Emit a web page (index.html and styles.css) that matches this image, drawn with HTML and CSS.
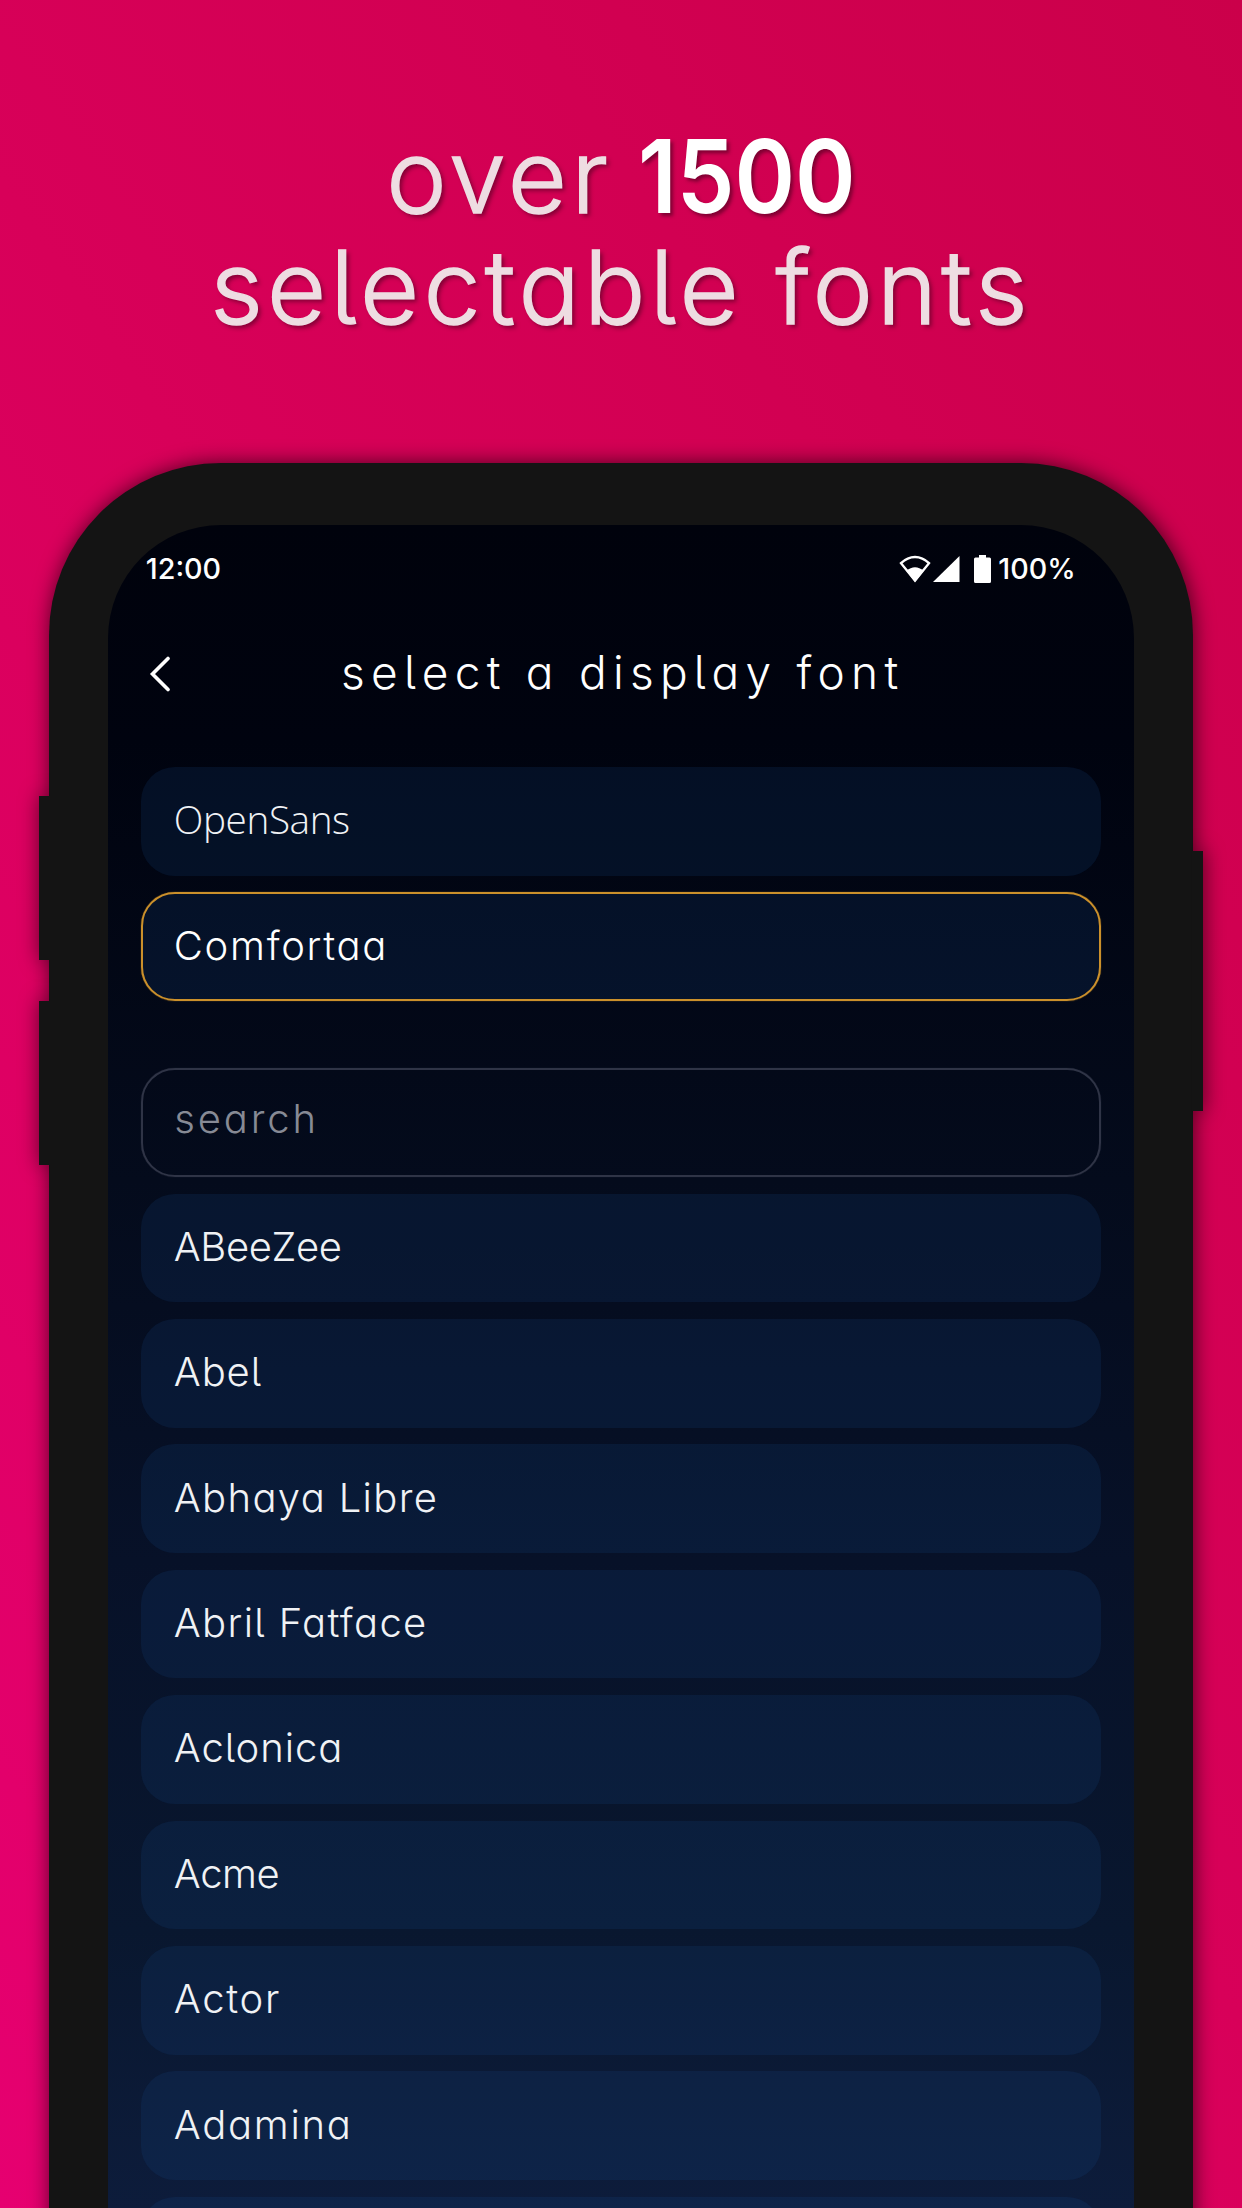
FILE: index.html
```
<!DOCTYPE html>
<html lang="en">
<head>
<meta charset="utf-8">
<title>Display fonts</title>
<link rel="stylesheet" href="styles.css">
</head>
<body>
<h1 class="headline"><span class="over">over</span> <strong class="count">1500</strong><br>selectable fonts</h1>
<div class="phone">
  <div class="frame">
    <main class="screen">
      <div class="status">
        <span>12:00</span>
        <div class="status-right">
          <svg class="wifi" width="32" height="28" viewBox="0 0 32 28"><path d="M16 25.500 2 8.200Q8.500 2 16 2t14 6.200Z" fill="none" stroke="#fff" stroke-width="2.400"/><path d="M16 27 7.500 16Q11.500 12.300 16 12.300T24.500 16Z" fill="#fff"/></svg>
          <svg class="signal" width="27" height="28" viewBox="0 0 27 28"><path d="M0 27 26.500 1V27Z" fill="#fff"/></svg>
          <svg class="battery" width="17" height="28" viewBox="0 0 17 28"><path d="M5 0h7v2.500h3.500A1.500 1.500 0 0 1 17 4v22.500a1.500 1.500 0 0 1-1.500 1.500h-14A1.500 1.500 0 0 1 0 26.500V4a1.500 1.500 0 0 1 1.500-1.500H5Z" fill="#fff"/></svg>
          <span>100%</span>
        </div>
      </div>
      <header class="bar">
        <svg class="back" width="22" height="36" viewBox="0 0 22 36"><path d="M19 2.500 3.500 18 19 33.500" fill="none" stroke="#fff" stroke-width="3.600" stroke-linecap="round"/></svg>
        <h2 class="title">select a display font</h2>
      </header>
      <ul class="list">
        <li class="row opensans">OpenSans</li>
        <li class="row selected ls-18">Comfortaa</li>
      </ul>
      <ul class="list">
        <li class="row search">search</li>
        <li class="row ls-tight">ABeeZee</li>
        <li class="row ls-10">Abel</li>
        <li class="row">Abhaya Libre</li>
        <li class="row">Abril Fatface</li>
        <li class="row ls-10">Aclonica</li>
        <li class="row ls-tight">Acme</li>
        <li class="row ls-18">Actor</li>
        <li class="row ls-18">Adamina</li>
        <li class="row"></li>
      </ul>
    </main>
  </div>
  <span class="side-button volume-up"></span>
  <span class="side-button volume-down"></span>
  <span class="side-button power"></span>
</div>
</body>
</html>
```
FILE: styles.css
```
* { box-sizing: border-box; }

body {
  margin: 0;
  height: 2208px;
  overflow: hidden;
  padding-top: 121px;
  background: linear-gradient(236deg, #cb004a 0%, #d80059 50%, #e60070 100%);
  font-family: Inter, "Open Sans", sans-serif;
  font-feature-settings: "cv11", "cv05";
  color: #fff;
}

.headline {
  margin: 0;
  height: 342px;
  font-size: 102px;
  line-height: 111px;
  font-weight: 300;
  letter-spacing: 4.200px;
  text-align: center;
  color: #eedde2;
  -webkit-text-stroke: 1.500px #eedde2;
  text-shadow: 3px 3px 4px rgba(60, 0, 25, .55);
}

.over {
  margin-right: -7px;
  letter-spacing: 4.200px;
}

.count {
  display: inline-block;
  margin-right: -24px;
  font-weight: 600;
  letter-spacing: 0;
  color: #fff;
  -webkit-text-stroke: 0;
  transform: scaleX(.9);
  transform-origin: left;
}

.phone {
  position: relative;
  width: 1143.400px;
  height: 1820px;
  margin: 0 auto;
}

.frame {
  height: 100%;
  padding: 62px 59px 0;
  border-radius: 172px 172px 0 0;
  background: #141414;
  box-shadow: 1px 0 20px rgba(0, 0, 0, .65);
}

.side-button {
  position: absolute;
  width: 11px;
  height: 163.500px;
  background: #141414;
  box-shadow: 1px 0 20px rgba(0, 0, 0, .6);
}

.volume-up,
.volume-down {
  left: -10.300px;
  clip-path: inset(-24px 0 -24px -24px);
}

.volume-up { top: 333px; }
.volume-down { top: 538px; }

.power {
  right: -10.300px;
  top: 388px;
  height: 259.500px;
  clip-path: inset(-24px -24px -24px 0);
}

.screen {
  height: 100%;
  padding: 26px 33px 0 32.500px;
  border-radius: 113px 113px 0 0;
  background: linear-gradient(#00020c 0, #00030f 215px, #040b1c 655px, #071128 1035px, #09172f 1405px, #0d1c3b 1683px);
}

.status {
  display: flex;
  justify-content: space-between;
  height: 35px;
  padding: 0 25px 0 5px;
  font-size: 28.700px;
  line-height: 35px;
  font-weight: 500;
}

.status-right { display: flex; }
.status-right svg { margin-top: 4px; }
.signal { margin-left: 2px; }
.battery { margin: 0 7px 0 14px; }

.bar {
  display: grid;
  grid-template-columns: 1fr auto 1fr;
  align-items: center;
  height: 56px;
  margin: 58px 0 67px;
}

.back { margin: 4px 0 0 8.500px; }

.title {
  margin: 0 -4px 0 0;
  font-size: 46px;
  line-height: 56px;
  font-weight: 300;
  letter-spacing: 6.250px;
}

.list {
  display: grid;
  gap: 16.800px;
  margin: 0 0 67.200px;
  padding: 0;
  list-style: none;
}

.row {
  display: flex;
  align-items: center;
  height: 108.600px;
  padding: 0 33px 3px;
  border-radius: 34px;
  background: rgba(24, 78, 140, .17);
  font-size: 40px;
  font-weight: 300;
  letter-spacing: 1.350px;
  color: #f0f2f5;
}

.opensans {
  padding-bottom: 5px;
  font-family: "Open Sans", sans-serif;
  font-size: 38.700px;
  letter-spacing: -.400px;
}

.selected {
  padding-left: 31px;
  border: 2px solid #cb902b;
  box-shadow: 0 0 1px #cb902b;
  color: #fff;
}

.search {
  padding: 0 33px 7px 31.500px;
  border: 2px solid #2f3446;
  box-shadow: 0 0 1px #2f3446;
  background: none;
  letter-spacing: 2.850px;
  color: #878a95;
}

.ls-tight { letter-spacing: -.400px; }
.ls-10 { letter-spacing: .900px; }
.ls-18 { letter-spacing: 1.700px; }
```
